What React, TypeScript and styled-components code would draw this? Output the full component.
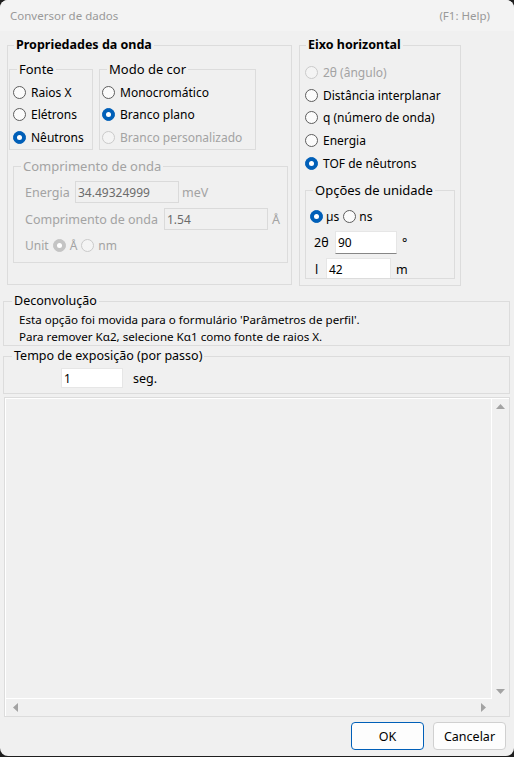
import React from 'react';
import styled, { createGlobalStyle } from 'styled-components';

const Global = createGlobalStyle`
  html, body { margin: 0; padding: 0; background: #1e1e1e; }
  body { font-family: "Noto Sans", "Open Sans", sans-serif; }
  * { box-sizing: border-box; }
`;

const Window = styled.div`
  width: 514px;
  height: 756px;
  background: #f0f0f0;
  border-radius: 8px;
  overflow: hidden;
  display: flex;
  flex-direction: column;
  font-size: 12px;
  color: #000;
`;

const TitleBar = styled.div`
  flex: none;
  height: 31px;
  background: #f3f3f3;
  display: flex;
  align-items: center;
  justify-content: space-between;
  padding: 0 24px 0 10px;
  color: #999;
  font-size: 11.5px;
`;

const TopRow = styled.div`
  display: flex;
  align-items: flex-start;
  gap: 7px;
  margin-top: 14px;
  padding-left: 7px;
`;

const Group = styled.div<{ $w?: number; $h: number; $ml?: number; $mt?: number; $full?: boolean }>`
  position: relative;
  flex: none;
  width: ${(p) => (p.$full ? 'auto' : `${p.$w}px`)};
  height: ${(p) => p.$h}px;
  margin-left: ${(p) => p.$ml ?? 0}px;
  margin-right: ${(p) => (p.$full ? 4 : 0)}px;
  margin-top: ${(p) => p.$mt ?? 0}px;
  border: 1px solid #dcdcdc;
`;

const Legend = styled.span<{ $bold?: boolean; $disabled?: boolean; $size?: number }>`
  position: absolute;
  left: ${(p) => (p.$bold ? 6 : 7)}px;
  top: -10px;
  padding: 0 2px;
  line-height: 18px;
  background: #f0f0f0;
  font-size: ${(p) => p.$size ?? (p.$bold ? 12.5 : 13)}px;
  font-weight: ${(p) => (p.$bold ? 700 : 400)};
  color: ${(p) => (p.$disabled ? '#a3a3a3' : '#000')};
  white-space: nowrap;
`;

const Inner = styled.div<{ $pt: number; $pl: number; $clip?: boolean }>`
  height: 100%;
  padding-top: ${(p) => p.$pt}px;
  padding-left: ${(p) => p.$pl}px;
  overflow: ${(p) => (p.$clip ? 'hidden' : 'visible')};
`;

const SubRow = styled.div`
  display: flex;
  gap: 6px;
  align-items: flex-start;
`;

const RadioRow = styled.div<{ $disabled?: boolean; $h?: number; $gap?: number }>`
  display: flex;
  align-items: center;
  gap: ${(p) => p.$gap ?? 5}px;
  height: ${(p) => p.$h ?? 22.5}px;
  color: ${(p) => (p.$disabled ? '#a3a3a3' : '#000')};
  white-space: nowrap;
`;

const Circle = styled.span<{ $checked?: boolean; $disabled?: boolean }>`
  position: relative;
  flex: none;
  width: 13px;
  height: 13px;
  border-radius: 50%;
  border: 1px solid
    ${(p) => (p.$checked ? (p.$disabled ? '#c4c4c4' : '#005fb8') : p.$disabled ? '#cacaca' : '#5d5d5d')};
  background: ${(p) => (p.$checked ? (p.$disabled ? '#c4c4c4' : '#005fb8') : p.$disabled ? '#f4f4f4' : '#fbfbfb')};
  &::after {
    content: '';
    display: ${(p) => (p.$checked ? 'block' : 'none')};
    position: absolute;
    left: 3px;
    top: 3px;
    width: 5px;
    height: 5px;
    border-radius: 50%;
    background: #fff;
  }
`;

const Radio = ({ label, checked, disabled, h }: { label: string; checked?: boolean; disabled?: boolean; h?: number }) => (
  <RadioRow $disabled={disabled} $h={h}>
    <Circle $checked={checked} $disabled={disabled} />
    <span>{label}</span>
  </RadioRow>
);

const FieldRow = styled.div<{ $h: number; $mt?: number; $gap?: number; $pl?: number }>`
  display: flex;
  align-items: center;
  height: ${(p) => p.$h}px;
  margin-top: ${(p) => p.$mt ?? 0}px;
  padding-left: ${(p) => p.$pl ?? 0}px;
  gap: ${(p) => p.$gap ?? 0}px;
  white-space: nowrap;
`;

const Label = styled.span<{ $disabled?: boolean; $w?: number; $size?: number; $ml?: number }>`
  display: inline-block;
  width: ${(p) => (p.$w ? `${p.$w}px` : 'auto')};
  margin-left: ${(p) => p.$ml ?? 0}px;
  flex: none;
  color: ${(p) => (p.$disabled ? '#a3a3a3' : '#000')};
  font-size: ${(p) => p.$size ?? 12.5}px;
`;

const TextBox = styled.div<{ $w: number; $h: number; $disabled?: boolean; $underline?: boolean }>`
  flex: none;
  width: ${(p) => p.$w}px;
  height: ${(p) => p.$h}px;
  display: flex;
  align-items: center;
  padding-left: 2px;
  background: ${(p) => (p.$disabled ? '#f0f0f0' : '#fff')};
  border: 1px solid ${(p) => (p.$disabled ? '#dadada' : '#e6e6e6')};
  border-bottom-color: ${(p) => (p.$disabled ? '#dadada' : p.$underline ? '#868686' : '#e6e6e6')};
  color: ${(p) => (p.$disabled ? '#6b6b6b' : '#000')};
  font-size: 12px;
`;

const Note = styled.div`
  padding-left: 15px;
  padding-top: 9px;
  font-size: 11.6px;
  line-height: 17px;
  color: #000;
`;

const Panel = styled.div`
  flex: none;
  margin: 3px 4px 0 4px;
  height: 320px;
  border: 1px solid #dcdcdc;
  display: grid;
  grid-template-columns: 1fr 17px;
  grid-template-rows: 1fr 17px;
  box-shadow: inset 1px 1px 0 #fff;
`;

const Canvas = styled.div`
  border-right: 1px solid #fff;
  border-bottom: 1px solid #fff;
`;

const VScroll = styled.div`
  display: flex;
  flex-direction: column;
  justify-content: space-between;
  align-items: center;
  padding: 6px 0 5px;
`;

const HScroll = styled.div`
  display: flex;
  justify-content: space-between;
  align-items: center;
  padding: 0 6px 0 8px;
`;

const Arrow = ({ dir }: { dir: 'up' | 'down' | 'left' | 'right' }) => {
  const pts = {
    up: '0,5 4.5,0 9,5',
    down: '0,0 9,0 4.5,5',
    left: '5,0 5,9 0,4.5',
    right: '0,0 0,9 5,4.5',
  }[dir];
  const vert = dir === 'up' || dir === 'down';
  return (
    <svg width={vert ? 9 : 5} height={vert ? 5 : 9} viewBox={vert ? '0 0 9 5' : '0 0 5 9'}>
      <polygon points={pts} fill="#a3a3a3" />
    </svg>
  );
};

const ButtonBar = styled.div`
  display: flex;
  justify-content: flex-end;
  gap: 9px;
  padding: 5px 8px 0 0;
`;

const Button = styled.button<{ $primary?: boolean }>`
  width: 73px;
  height: 28px;
  border-radius: 4px;
  background: #fdfdfd;
  border: 1px solid ${(p) => (p.$primary ? '#005fb8' : '#d0d0d0')};
  font-family: "Noto Sans", "Open Sans", sans-serif;
  font-size: 12.5px;
  color: #000;
  padding: 0;
`;

export default function App() {
  return (
    <>
      <Global />
      <Window>
        <TitleBar>
          <span>Conversor de dados</span>
          <span>(F1: Help)</span>
        </TitleBar>

        <TopRow>
          <Group $w={285} $h={240}>
            <Legend $bold>Propriedades da onda</Legend>
            <Inner $pt={23} $pl={1}>
              <SubRow>
                <Group $w={84} $h={81}>
                  <Legend>Fonte</Legend>
                  <Inner $pt={11} $pl={3}>
                    <Radio label="Raios X" />
                    <Radio label="Elétrons" />
                    <Radio label="Nêutrons" checked />
                  </Inner>
                </Group>
                <Group $w={157} $h={81}>
                  <Legend>Modo de cor</Legend>
                  <Inner $pt={11} $pl={2}>
                    <Radio label="Monocromático" />
                    <Radio label="Branco plano" checked />
                    <Radio label="Branco personalizado" disabled />
                  </Inner>
                </Group>
              </SubRow>
              <Group $w={275} $h={97} $ml={4} $mt={16}>
                <Legend $disabled>Comprimento de onda</Legend>
                <Inner $pt={14} $pl={11}>
                  <FieldRow $h={22}>
                    <Label $disabled $w={50}>Energia</Label>
                    <TextBox $w={104} $h={22} $disabled>34.49324999</TextBox>
                    <Label $disabled $ml={3}>meV</Label>
                  </FieldRow>
                  <FieldRow $h={22} $mt={5}>
                    <Label $disabled $w={139}>Comprimento de onda</Label>
                    <TextBox $w={104} $h={22} $disabled>1.54</TextBox>
                    <Label $disabled $ml={4}>Å</Label>
                  </FieldRow>
                  <FieldRow $h={22} $mt={4} $gap={4}>
                    <Label $disabled $size={12}>Unit</Label>
                    <RadioRow $disabled $h={22} $gap={4}>
                      <Circle $checked $disabled />
                      <span>Å</span>
                    </RadioRow>
                    <RadioRow $disabled $h={22} $gap={4}>
                      <Circle $disabled />
                      <span>nm</span>
                    </RadioRow>
                  </FieldRow>
                </Inner>
              </Group>
            </Inner>
          </Group>

          <Group $w={162} $h={241}>
            <Legend $bold>Eixo horizontal</Legend>
            <Inner $pt={15} $pl={5}>
              <Radio label="2θ (ângulo)" disabled h={22.8} />
              <Radio label="Distância interplanar" h={22.8} />
              <Radio label="q (número de onda)" h={22.8} />
              <Radio label="Energia" h={22.8} />
              <Radio label="TOF de nêutrons" checked h={22.8} />
              <Group $w={150} $h={89} $mt={15}>
                <Legend>Opções de unidade</Legend>
                <Inner $pt={0} $pl={0} $clip>
                  <FieldRow $h={22} $mt={15} $pl={4} $gap={4}>
                    <RadioRow $h={22} $gap={3}>
                      <Circle $checked />
                      <span>µs</span>
                    </RadioRow>
                    <RadioRow $h={22} $gap={3}>
                      <Circle />
                      <span>ns</span>
                    </RadioRow>
                  </FieldRow>
                  <FieldRow $h={23} $mt={3} $pl={8}>
                    <Label $w={21}>2θ</Label>
                    <TextBox $w={62} $h={23} $underline>90</TextBox>
                    <Label $ml={5}>°</Label>
                  </FieldRow>
                  <FieldRow $h={23} $mt={4} $pl={9}>
                    <Label $w={11}>l</Label>
                    <TextBox $w={65} $h={23} $underline>42</TextBox>
                    <Label $ml={5}>m</Label>
                  </FieldRow>
                </Inner>
              </Group>
            </Inner>
          </Group>
        </TopRow>

        <Group $full $h={45} $ml={3} $mt={15}>
          <Legend $size={12.5} style={{ left: 8 }}>Deconvolução</Legend>
          <Note>
            Esta opção foi movida para o formulário 'Parâmetros de perfil'.
            <br />
            Para remover Kα2, selecione Kα1 como fonte de raios X.
          </Note>
        </Group>

        <Group $full $h={38} $ml={3} $mt={10}>
          <Legend $size={12.5} style={{ left: 8 }}>Tempo de exposição (por passo)</Legend>
          <FieldRow $h={20} $mt={11} $pl={57}>
            <TextBox $w={62} $h={20}>1</TextBox>
            <Label $ml={10}>seg.</Label>
          </FieldRow>
        </Group>

        <Panel>
          <Canvas />
          <VScroll>
            <Arrow dir="up" />
            <Arrow dir="down" />
          </VScroll>
          <HScroll>
            <Arrow dir="left" />
            <Arrow dir="right" />
          </HScroll>
          <div />
        </Panel>

        <ButtonBar>
          <Button $primary>OK</Button>
          <Button>Cancelar</Button>
        </ButtonBar>
      </Window>
    </>
  );
}
